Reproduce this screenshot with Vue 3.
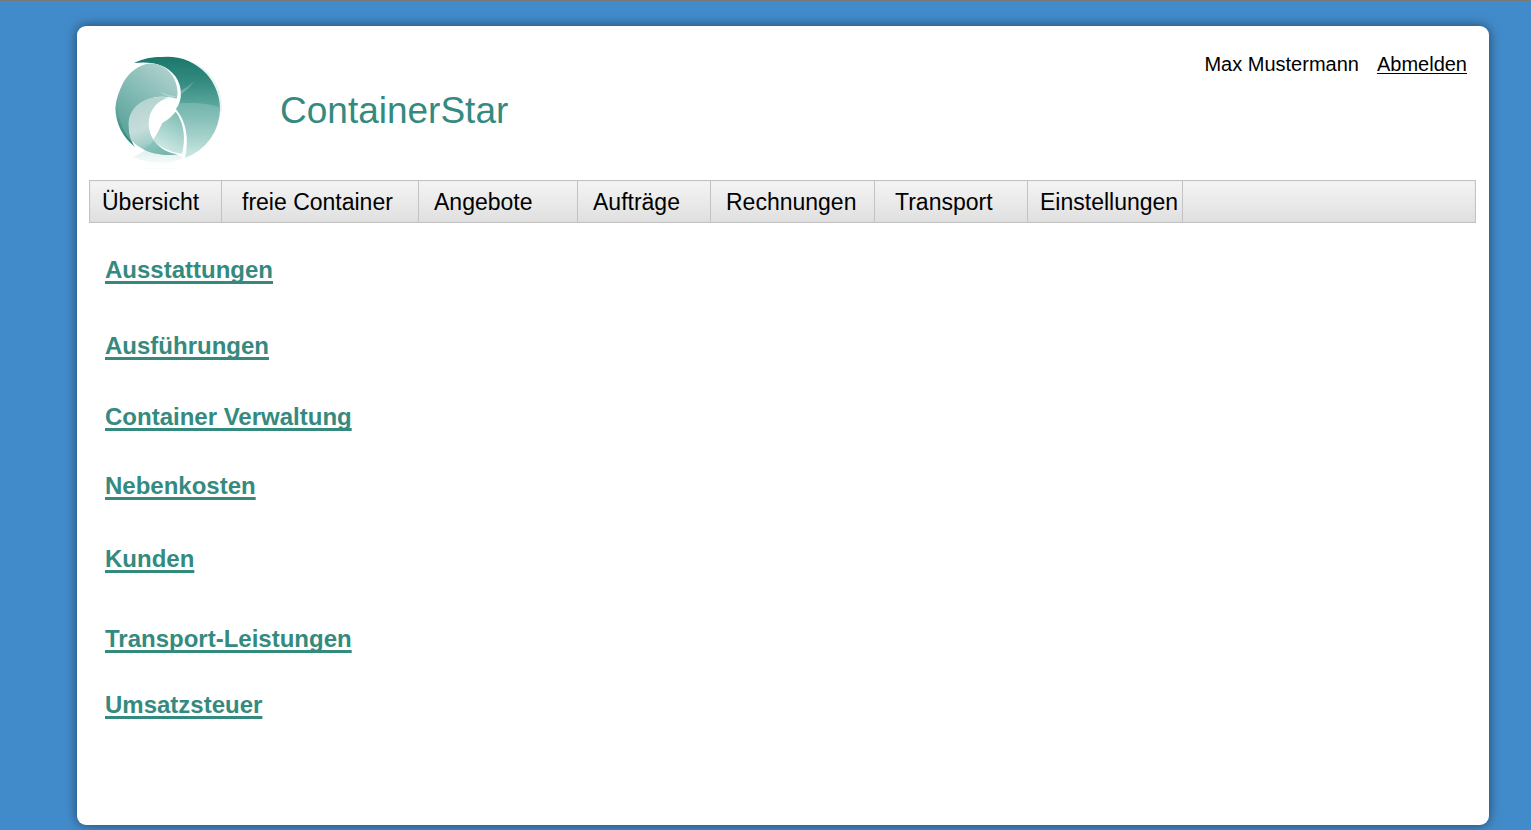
<script setup>
const menu = [
  { label: 'Übersicht', indent: 'indent-small' },
  { label: 'freie Container', indent: 'indent-large' },
  { label: 'Angebote', indent: 'indent-medium' },
  { label: 'Aufträge', indent: 'indent-medium' },
  { label: 'Rechnungen', indent: 'indent-medium' },
  { label: 'Transport', indent: 'indent-large' },
  { label: 'Einstellungen', indent: 'indent-small' },
]

const settings = [
  'Ausstattungen',
  'Ausführungen',
  'Container Verwaltung',
  'Nebenkosten',
  'Kunden',
  'Transport-Leistungen',
  'Umsatzsteuer',
]
</script>

<template>
  <div class="page">
    <div class="card">
      <header class="header">
        <svg class="logo" viewBox="0 0 405 390" aria-hidden="true">
          <defs>
            <linearGradient id="crescent" x1="0" y1="0" x2="0" y2="1">
              <stop offset="0" stop-color="#1b776b" />
              <stop offset="0.25" stop-color="#348b80" />
              <stop offset="0.55" stop-color="#67b0a6" />
              <stop offset="1" stop-color="#cfe9e5" />
            </linearGradient>
            <linearGradient id="leaf" x1="0.8" y1="0" x2="0.2" y2="1">
              <stop offset="0" stop-color="#b0d1ce" />
              <stop offset="0.6" stop-color="#78b5ae" />
              <stop offset="1" stop-color="#57a198" />
            </linearGradient>
            <linearGradient id="rim" x1="0" y1="0" x2="0" y2="1">
              <stop offset="0" stop-color="#a2cbc7" />
              <stop offset="0.6" stop-color="#5da49c" />
              <stop offset="1" stop-color="#267e72" />
            </linearGradient>
            <linearGradient id="petal" x1="0.3" y1="0" x2="0.6" y2="1">
              <stop offset="0" stop-color="#b3d3cf" />
              <stop offset="0.5" stop-color="#c6dddb" />
              <stop offset="0.75" stop-color="#a3cfc9" />
              <stop offset="1" stop-color="#5eaaa0" />
            </linearGradient>
            <linearGradient id="core" x1="0.8" y1="0" x2="0.4" y2="1">
              <stop offset="0" stop-color="#7dbdb4" />
              <stop offset="1" stop-color="#d3ebe7" />
            </linearGradient>
            <linearGradient id="base" x1="0" y1="0" x2="0" y2="1">
              <stop offset="0" stop-color="#cfe7e4" />
              <stop offset="1" stop-color="#f5fbfa" />
            </linearGradient>
            <linearGradient id="sheen" x1="0" y1="0" x2="0" y2="1">
              <stop offset="0" stop-color="#ffffff" stop-opacity="0.18" />
              <stop offset="1" stop-color="#ffffff" stop-opacity="0" />
            </linearGradient>
          </defs>
          <path d="M262 44C330 66 372 130 365 200L358 203C365 130 325 75 262 44Z" fill="#e8f4f2" />
          <path d="M102 54C128 41 156 36 185 36A157 157 0 0 1 360 190A157 157 0 0 1 255 339C268 280 259 230 228 192C250 164 246 123 226 94C199 57 154 48 102 54Z" fill="url(#crescent)" />
          <path d="M239 175C285 171 330 176 359 187A157 157 0 0 1 255 339C268 280 259 230 228 192Z" fill="url(#sheen)" />
          <path d="M142 56A155 155 0 0 0 46 190A155 155 0 0 0 105 306C91 286 84 260 86 234C71 175 95 100 142 56Z" fill="url(#rim)" />
          <path d="M142 56C190 50 232 89 233 145L230 161C176 145 100 159 86 234C87 257 90 274 97 291C50 246 38 155 78 100C94 78 114 63 142 56Z" fill="url(#leaf)" />
          <path d="M99 335C126 326 147 309 162 286C178 309 204 326 235 329L250 339C220 357 151 360 99 335Z" fill="url(#base)" />
          <path d="M205 158C134 147 86 188 86 237C86 258 89 275 93 285C128 323 184 335 233 328C188 324 147 288 146 236C146 196 171 167 205 158Z" fill="url(#petal)" />
          <path d="M187 234C204 224 217 212 227 200C254 235 257 285 246 326C204 321 173 301 159 284C171 269 179 250 187 234Z" fill="url(#core)" />
          <path d="M161 286C178 309 204 324 233 328C186 333 152 325 130 313C143 306 154 297 161 286Z" fill="#83bfb6" opacity="0.65" />
          <path d="M239 139Q265 126 283 109Q266 133 241 150Z" fill="#b6d9d4" opacity="0.35" />
          <path d="M175 139Q204 151 230 154L217 160Q193 153 175 139Z" fill="#d8ebe8" opacity="0.4" />
          <path d="M130 371H240" stroke="#fafcfc" stroke-width="3" />
        </svg>
        <h1 class="brand">ContainerStar</h1>
        <div class="account">
          <span>Max Mustermann</span>
          <a class="logout" href="#">Abmelden</a>
        </div>
      </header>

      <nav class="menu" aria-label="Hauptmenü">
        <a v-for="item in menu" :key="item.label" :class="item.indent" href="#">{{ item.label }}</a>
      </nav>

      <main>
        <ul class="settings">
          <li v-for="entry in settings" :key="entry"><a href="#">{{ entry }}</a></li>
        </ul>
      </main>
    </div>
  </div>
</template>

<style>
body {
  margin: 0;
  background: #428bca;
}
</style>

<style scoped>
.page {
  box-sizing: border-box;
  display: flex;
  min-height: 100vh;
  padding: 25px 42px 5px 77px;
  border-top: 1px solid #777;
  background: #428bca;
  font-family: "Liberation Sans", Arial, sans-serif;
  color: #000;
}

.card {
  box-sizing: border-box;
  flex: 1;
  min-width: 0;
  padding: 19px 13px 40px 12px;
  border-radius: 9px;
  background: #fff;
  box-shadow: 0 0 12px rgba(0, 0, 0, 0.5);
}

.header {
  display: flex;
  align-items: flex-start;
  height: 135px;
  padding: 0 9px 0 11px;
}

.logo {
  width: 135px;
  height: 130px;
  flex: none;
}

.brand {
  margin: 45px 0 0 45px;
  font-size: 37px;
  line-height: 42px;
  font-weight: 400;
  color: #358a80;
}

.account {
  display: flex;
  gap: 18px;
  margin-left: auto;
  padding-top: 7px;
  font-size: 20px;
  line-height: 24px;
}

.logout {
  color: inherit;
  text-decoration: underline;
  text-decoration-thickness: 1px;
  text-underline-offset: 2px;
}

.menu {
  display: grid;
  grid-template-columns: 132px 197px 159px 133px 164px 153px 155px;
  border: 1px solid #c3c3c3;
  background: linear-gradient(#f4f4f4, #e0e0e0);
  box-shadow: inset 0 0 1px #c3c3c3;
}

.menu a {
  padding-top: 2px;
  border-right: 1px solid #c3c3c3;
  font-size: 23px;
  line-height: 39px;
  color: inherit;
  text-decoration: none;
  white-space: nowrap;
}

.menu .indent-small {
  padding-left: 12px;
}

.menu .indent-medium {
  padding-left: 15px;
}

.menu .indent-large {
  padding-left: 20px;
}

.settings {
  display: grid;
  grid-template-rows: 76px 71px 69px 73px 80px 66px 28px;
  margin: 0;
  padding: 33px 0 0 16px;
  list-style: none;
  font-size: 24px;
  line-height: 28px;
  font-weight: 700;
}

.settings a {
  color: #358a80;
  text-decoration: underline;
  text-decoration-thickness: 3px;
  text-decoration-skip-ink: none;
  text-underline-offset: 3px;
}
</style>
